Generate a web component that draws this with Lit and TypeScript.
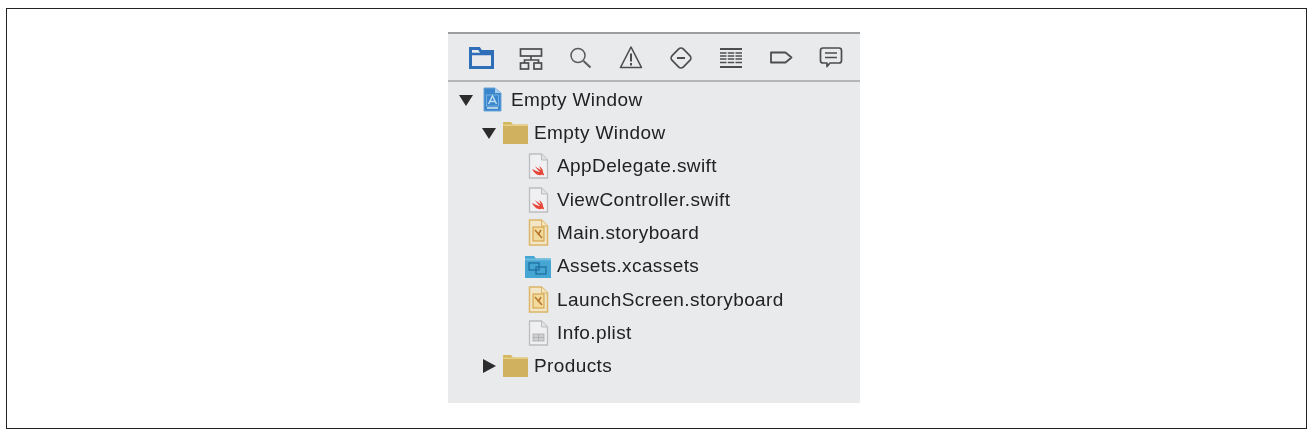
import { LitElement, html, css, svg } from "lit";
import { customElement } from "lit/decorators.js";

const G = "#4d4d4f";
const toolIcons = [
  svg`<path d="M3.500 23.500V4.500h8.500l2 3h11.500v16z" fill="none" stroke="#2f6fb8" stroke-width="3"/><path d="M3.500 10h22" stroke="#2f6fb8" stroke-width="2.500"/>`,
  svg`<g fill="none" stroke="${G}" stroke-width="1.700"><rect x="3.500" y="5" width="21" height="7"/><path d="M14 12v4M7.500 19v-3h14v3"/><rect x="3.500" y="19" width="8" height="6"/><rect x="17" y="19" width="7.500" height="6"/></g>`,
  svg`<g fill="none" stroke="#5a5a5c" stroke-width="1.500"><circle cx="11" cy="11.500" r="7"/><path d="M16.500 17l7 6.500" stroke-width="2"/></g>`,
  svg`<g fill="none" stroke="${G}" stroke-width="1.600" stroke-linejoin="round"><path d="M14 3L3.500 23.500h21z"/><path d="M14 9.500v8M14 19v2.500" stroke-width="2"/></g>`,
  svg`<g fill="none" stroke="${G}" stroke-width="1.700"><rect x="6" y="6" width="16" height="16" rx="3.500" transform="rotate(45 14 14)"/><path d="M10 14h8" stroke-width="2"/></g>`,
  svg`<g fill="none" stroke="${G}"><path d="M3 5h22M3 23h22" stroke-width="1.800"/><path d="M3 9h22M3 12h22M3 15h22M3 18.500h22" stroke-width="1.500" stroke-dasharray="6.500 1.250"/></g>`,
  svg`<path d="M4 8.500h14.500l6 5-6 5H4z" fill="none" stroke="${G}" stroke-width="1.800" stroke-linejoin="round"/>`,
  svg`<g fill="none" stroke="${G}" stroke-width="1.700"><path d="M6 4h16a2.500 2.500 0 0 1 2.500 2.500v10a2.500 2.500 0 0 1-2.500 2.500h-9l-3 3.500V19H6a2.500 2.500 0 0 1-2.500-2.500v-10A2.500 2.500 0 0 1 6 4z" stroke-linejoin="round"/><path d="M8 9h12M8 13.500h12"/></g>`,
];

const folder = svg`<svg width="27" height="24" viewBox="0 0 27 24"><path d="M1 2a1 1 0 0 1 1-1h7l2 2.500h15v19.500H1z" fill="#d4b65c"/><path d="M1 3.500h25v1.500H1z" fill="#e6d088"/><path d="M1 5h25v18H1z" fill="#d0b160"/></svg>`;

const page = (inner: unknown) => svg`<svg width="21" height="26" viewBox="0 0 21 26"><path d="M1.500 1h12l6 6v18h-18z" fill="#f0f0f2" stroke="#bcbdc0" stroke-width="1.300"/><path d="M13.500 1v6h6" fill="#e0e1e3" stroke="#bcbdc0"/>${inner}</svg>`;
const swift = page(svg`<path d="M4 16c3 1.500 6 3 8 3-1-1-4-4-5-6 2 2 5 3.500 6 4-1-2-1.500-3-1.500-4 2 2 4 4 3.500 6.500 1 1 1 2 1 3-1-1-2-1-3-.5-3 1-7-2-9-6z" fill="#e8483a"/>`);
const board = svg`<svg width="21" height="27" viewBox="0 0 21 27"><path d="M1.500 1h12l6 6v19h-18z" fill="#f3e6c6" stroke="#dcb566" stroke-width="1.500"/><path d="M13.500 1v6h6" fill="#f3e4bc" stroke="#dcb566"/><rect x="5" y="8" width="11" height="14" fill="#f2d99c" stroke="#cf9c3e"/><path d="M7 11l7 8M13 11l-3 5" stroke="#b5762a" stroke-width="1.500" fill="none"/></svg>`;
const plist = page(svg`<rect x="5" y="14" width="11" height="7" fill="#cfd0d2" stroke="#a9aaad" stroke-width=".8"/><path d="M10.500 14v7M5 17.500h11" stroke="#a9aaad" stroke-width=".8"/>`);
const project = svg`<svg width="19" height="27" viewBox="0 0 19 27"><path d="M1 2h11l6 5v18H1z" fill="#3a86cc" stroke="#6aa5d8"/><path d="M12 2v5h6" fill="#a8d0ee"/><path d="M4 22h11" stroke="#d6e8f6" stroke-width="1.500"/><path d="M5.500 18l4-8 4 8M7 15.500h5" fill="none" stroke="#bcdcf3" stroke-width="1.500"/><rect x="3.500" y="9" width="12" height="11" fill="none" stroke="#8cc0e8" stroke-width=".7"/></svg>`;
const assets = svg`<svg width="28" height="25" viewBox="0 0 28 25"><path d="M1 2h9l2 2.500h15V24H1z" fill="#45a6d3"/><path d="M1 4.500h26v2H1z" fill="#6fbcdf"/><g fill="none" stroke="#1f6f9f" stroke-width="1.300"><rect x="5" y="9" width="10" height="7"/><rect x="12" y="13" width="10" height="7"/></g></svg>`;

type Row = { name: string; pad: number; twist?: "open" | "closed"; icon: unknown };
const rows: Row[] = [
  { name: "Empty Window", pad: 6, twist: "open", icon: project },
  { name: "Empty Window", pad: 29, twist: "open", icon: folder },
  { name: "AppDelegate.swift", pad: 52, icon: swift },
  { name: "ViewController.swift", pad: 52, icon: swift },
  { name: "Main.storyboard", pad: 52, icon: board },
  { name: "Assets.xcassets", pad: 52, icon: assets },
  { name: "LaunchScreen.storyboard", pad: 52, icon: board },
  { name: "Info.plist", pad: 52, icon: plist },
  { name: "Products", pad: 29, twist: "closed", icon: folder },
];

@customElement("app-root")
export class AppRoot extends LitElement {
  static styles = css`
    :host { display: block; height: 436px; font-family: "Liberation Sans", Arial, sans-serif; background: #fff; }
    .frame { box-sizing: border-box; margin: 0 5px 0 6px; position: relative; top: 8px; height: 421px; border: 1.500px solid #222; display: flex; justify-content: center; padding-right: 5px; padding-top: 22.500px; }
    .panel { width: 412px; height: 371px; background: #e9eaec; border-top: 2px solid #9c9d9f; box-sizing: border-box; filter: blur(0.5px); }
    .toolbar { height: 48px; box-sizing: border-box; display: flex; padding: 2px 0 0 8px; align-items: center; border-bottom: 2px solid #b4b5b7; margin-bottom: 1.600px; }
    .tool { width: 50px; display: flex; justify-content: center; }
    .row { display: flex; align-items: center; height: 33.300px; }
    .twist { width: 24px; display: flex; justify-content: center; flex: none; }
    .icon { width: 28px; display: flex; justify-content: center; align-items: center; flex: none; }
    .name { margin-left: 5px; font-size: 19px; color: #222224; white-space: nowrap; letter-spacing: 0.4px; }
  `;
  render() {
    return html`<div class="frame"><div class="panel">
      <div class="toolbar">${toolIcons.map((i) => html`<div class="tool"><svg width="28" height="28" viewBox="0 0 28 28">${i}</svg></div>`)}</div>
      ${rows.map((r) => html`<div class="row" style="padding-left:${r.pad}px">
        <div class="twist">${r.twist === "open"
          ? html`<svg width="14" height="12" viewBox="0 0 14 12"><path d="M0 1h14L7 12z" fill="#2c2c2c"/></svg>`
          : r.twist === "closed"
          ? html`<svg width="13" height="14" viewBox="0 0 13 14"><path d="M0 0l13 7-13 7z" fill="#2c2c2c"/></svg>`
          : ""}</div>
        <div class="icon">${r.icon}</div>
        <div class="name">${r.name}</div>
      </div>`)}
    </div></div>`;
  }
}
